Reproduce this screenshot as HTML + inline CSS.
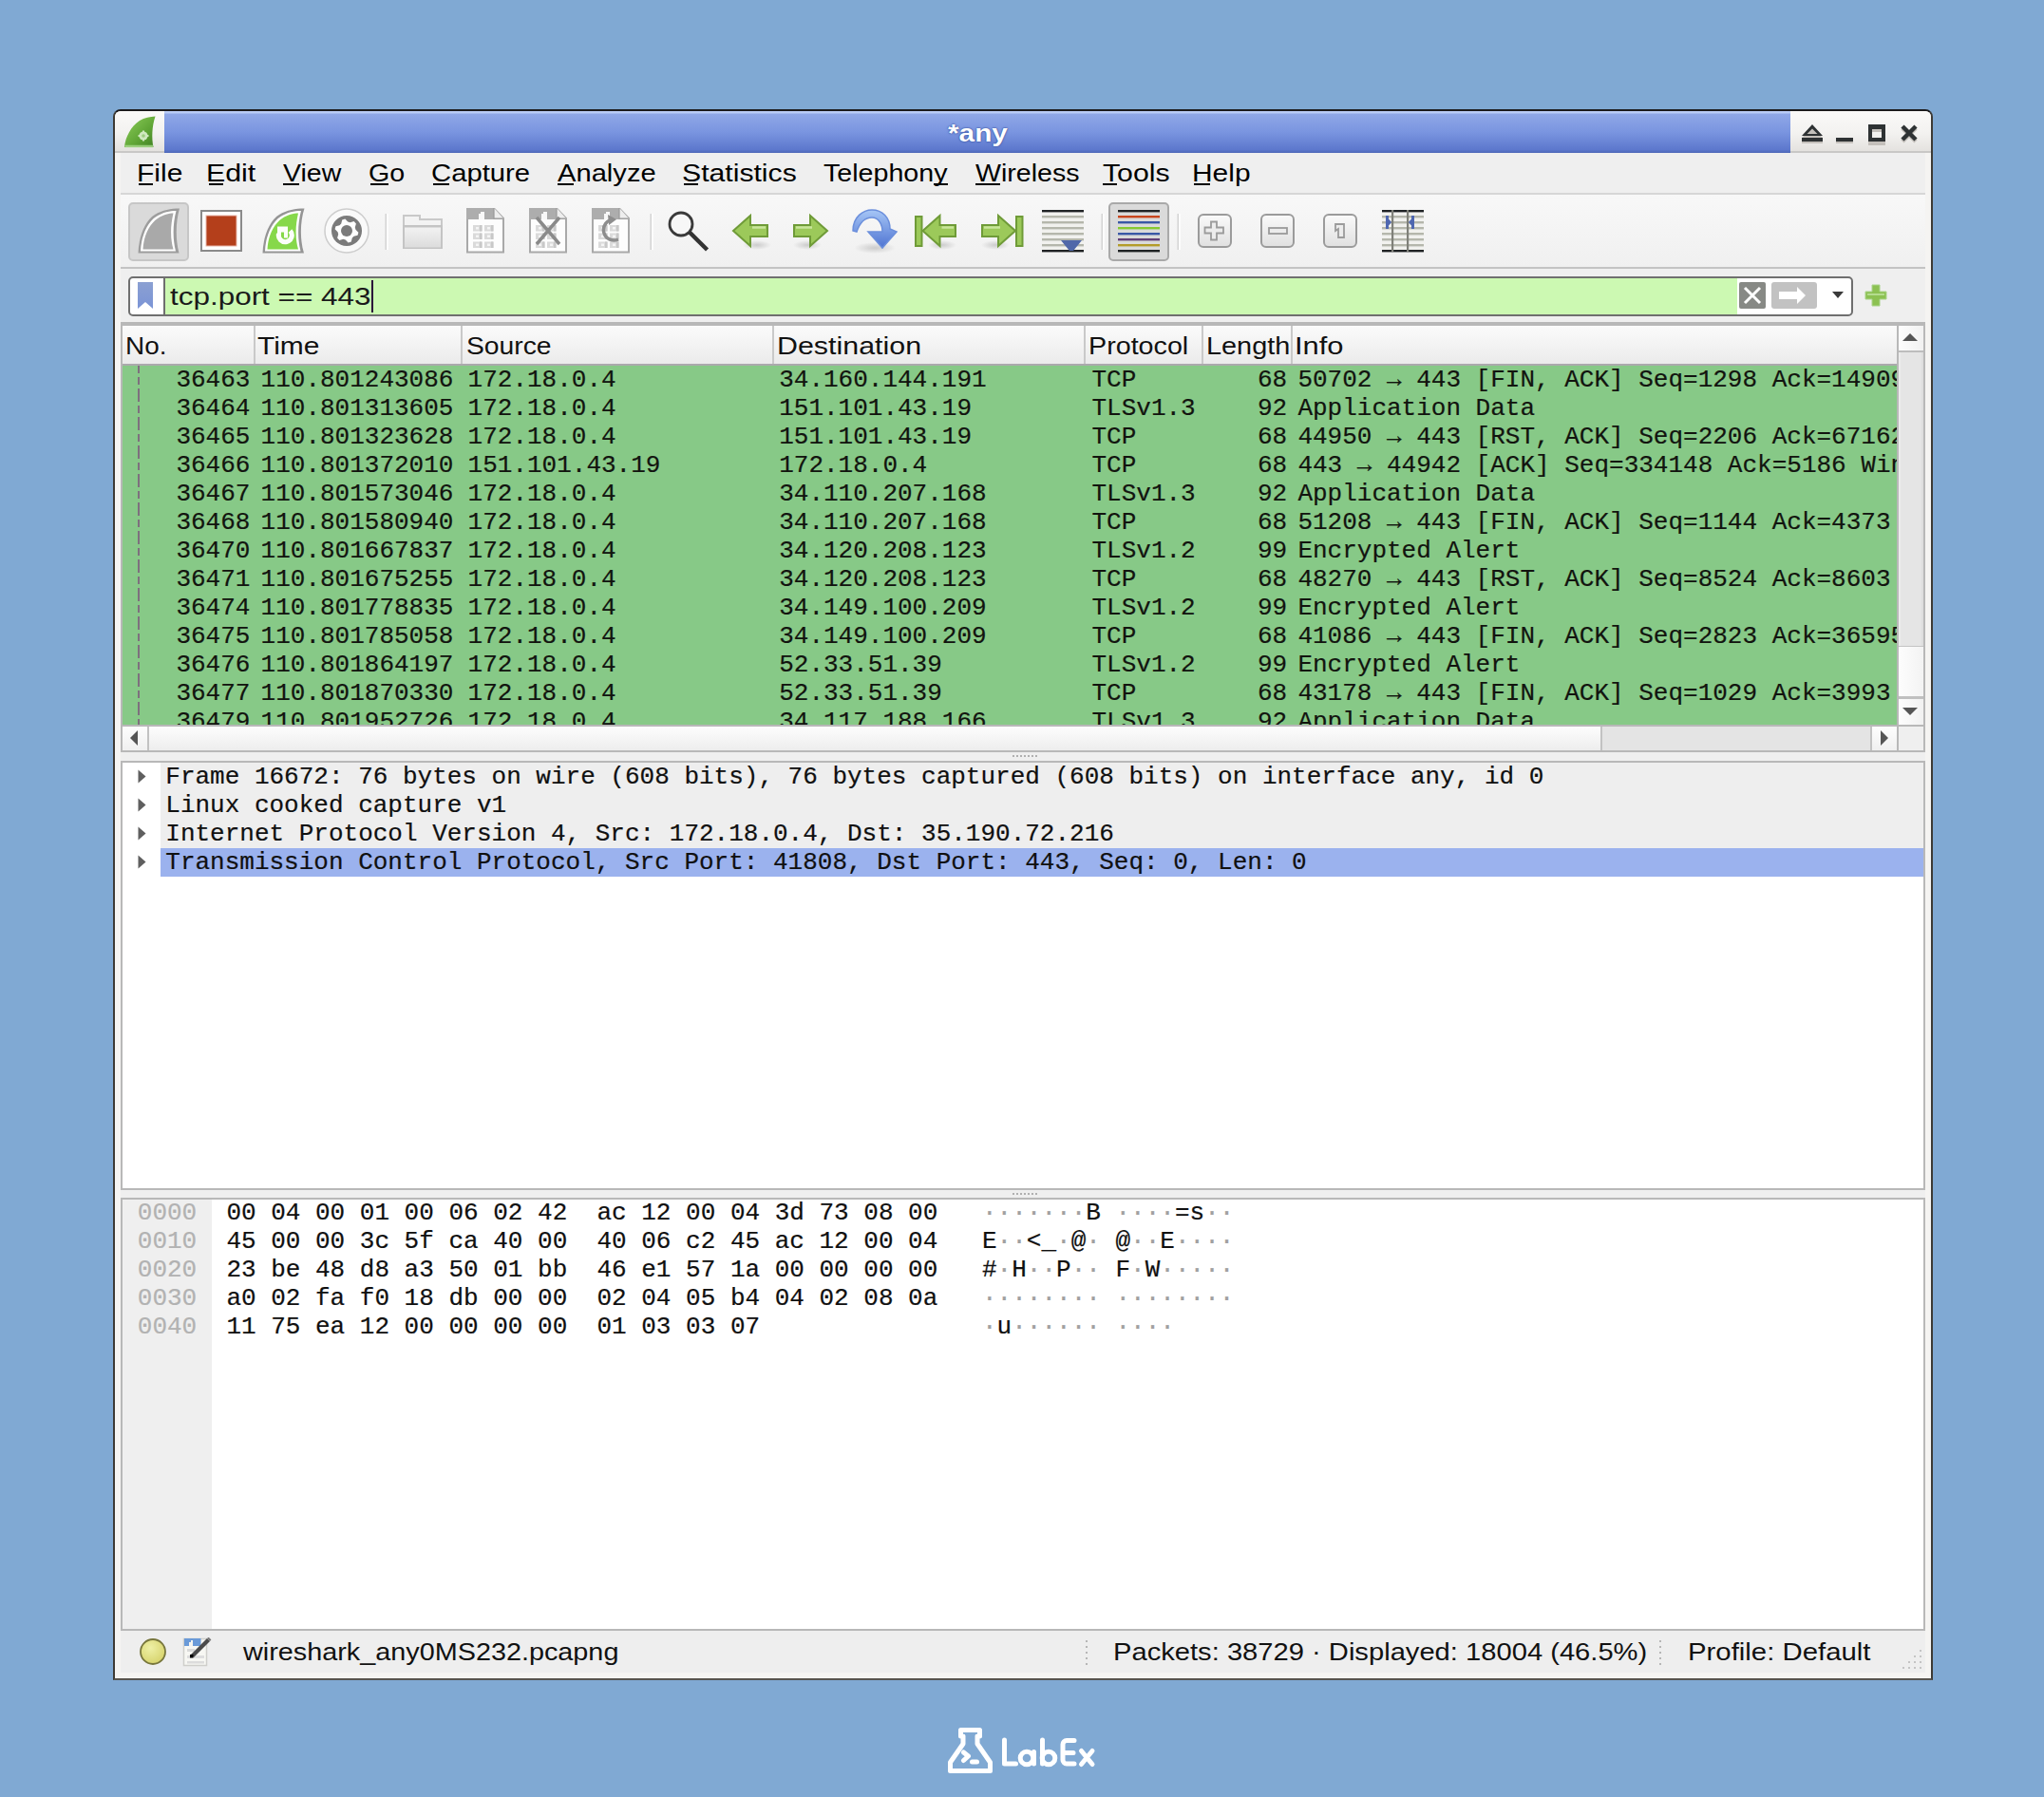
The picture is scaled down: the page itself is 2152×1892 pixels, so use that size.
<!DOCTYPE html><html><head><meta charset="utf-8"><style>
html,body{margin:0;padding:0}
body{width:2152px;height:1892px;background:#80a9d3;position:relative;overflow:hidden;font-family:"Liberation Sans",sans-serif}
div,span,svg{position:absolute;box-sizing:border-box}
.s{font-family:"Liberation Sans",sans-serif;white-space:pre;line-height:1;transform-origin:0 0}
.m{font-family:"Liberation Mono",monospace;white-space:pre;line-height:1;-webkit-text-stroke:0.2px currentColor}
</style></head><body>
<div style="left:119px;top:115px;width:1916px;height:1654px;background:#f5f4f2;border:2px solid #3d3a35;border-top-color:#1b1a1c;border-bottom-color:#57544f;border-radius:8px 8px 0 0"></div><div style="left:121px;top:117px;width:52px;height:42px;background:linear-gradient(#faf9f8,#f3f2f0 55%,#e4e2df);border-top-left-radius:6px"></div><div style="left:173px;top:117px;width:1712px;height:44px;background:linear-gradient(#b9cbf6 0px,#b9cbf6 2px,#8fa7e7 3px,#7a95e0 50%,#5d78cd 92%,#4e68b8 100%)"></div><div style="left:1885px;top:117px;width:148px;height:42px;background:linear-gradient(#faf9f8,#f3f2f0 55%,#e4e2df);border-top-right-radius:6px"></div><div style="left:121px;top:159px;width:52px;height:2px;background:#c9c8c6"></div><div style="left:1885px;top:159px;width:148px;height:2px;background:#c9c8c6"></div><svg style="left:129px;top:121px" width="38" height="36" viewBox="0 0 38 36">
<defs><linearGradient id="tg" x1="0" y1="0" x2="1" y2="1"><stop offset="0" stop-color="#8fcf5c"/><stop offset="0.6" stop-color="#5fa535"/><stop offset="1" stop-color="#3f7f22"/></linearGradient></defs>
<path d="M2 34 C3 23 9 12 18 6 C23 3 29 2 34.5 1.5 C31 12 30.5 24 32.5 34 Z" fill="url(#tg)"/>
<path d="M2.5 33 L32 33" stroke="#a6d88a" stroke-width="2.5" opacity="0.85"/>
<circle cx="22" cy="22" r="4.6" fill="#cfe8bf"/><circle cx="22" cy="22" r="1.8" fill="#9ccc80"/>
<path d="M22 16.5 v3 M22 24.5 v3 M16.5 22 h3 M24.5 22 h3" stroke="#cfe8bf" stroke-width="2"/>
</svg><span class="s" style="left:997.52px;top:128.47px;font-size:25px;color:#fff;transform:scaleX(1.1902);font-weight:bold;text-shadow:0 0 2px #2f4a9a,0 0 1px #2f4a9a">*any</span><svg style="left:1895px;top:129px" width="130" height="26" viewBox="0 0 130 26">
<g fill="#c4c0bb">
<path d="M2 14 L13 4 L24 14 Z" transform="translate(0,2)"/><rect x="2" y="18" width="22" height="4"/>
<rect x="38" y="18" width="18" height="4"/>
<path d="M72 4 h18 v18 h-18 z M76 8 v10 h10 v-10 z" fill-rule="evenodd" transform="translate(0,2)"/>
</g>
<g fill="#2e3233">
<path d="M2 14 L13 2 L24 14 Z M7.5 12 L13 6.5 L18.5 12 Z" fill-rule="evenodd"/><rect x="2" y="16" width="22" height="4"/>
<rect x="38" y="16" width="18" height="4"/>
<path d="M72 2 h18 v18 h-18 z M76 7 v9 h10 v-9 z" fill-rule="evenodd"/>
</g>
<path d="M108 4 L122 18 M122 4 L108 18" stroke="#c4c0bb" stroke-width="4.5" transform="translate(0,2)"/>
<path d="M108 4 L122 18 M122 4 L108 18" stroke="#2e3233" stroke-width="4.5"/>
</svg><div style="left:127px;top:161px;width:1900px;height:42px;background:#efefef"></div><div style="left:127px;top:203px;width:1900px;height:2px;background:#d6d6d6"></div><span class="s" style="left:143.69px;top:169.46px;font-size:26px;color:#000;transform:scaleX(1.1538);">File</span><span class="s" style="left:216.58px;top:169.46px;font-size:26px;color:#000;transform:scaleX(1.1667);">Edit</span><span class="s" style="left:298.00px;top:169.46px;font-size:26px;color:#000;transform:scaleX(1.0982);">View</span><span class="s" style="left:388.48px;top:169.46px;font-size:26px;color:#000;transform:scaleX(1.1000);">Go</span><span class="s" style="left:454.30px;top:169.46px;font-size:26px;color:#000;transform:scaleX(1.1253);">Capture</span><span class="s" style="left:587.00px;top:169.46px;font-size:26px;color:#000;transform:scaleX(1.1209);">Analyze</span><span class="s" style="left:717.54px;top:169.46px;font-size:26px;color:#000;transform:scaleX(1.1608);">Statistics</span><span class="s" style="left:866.95px;top:169.46px;font-size:26px;color:#000;transform:scaleX(1.1008);">Telephony</span><span class="s" style="left:1027.00px;top:169.46px;font-size:26px;color:#000;transform:scaleX(1.0990);">Wireless</span><span class="s" style="left:1160.78px;top:169.46px;font-size:26px;color:#000;transform:scaleX(1.1633);">Tools</span><span class="s" style="left:1255.34px;top:169.46px;font-size:26px;color:#000;transform:scaleX(1.1510);">Help</span><div style="left:146px;top:193px;width:15px;height:2px;background:#000"></div><div style="left:220px;top:193px;width:15px;height:2px;background:#000"></div><div style="left:298px;top:193px;width:17px;height:2px;background:#000"></div><div style="left:390px;top:193px;width:19px;height:2px;background:#000"></div><div style="left:456px;top:193px;width:17px;height:2px;background:#000"></div><div style="left:587px;top:193px;width:17px;height:2px;background:#000"></div><div style="left:720px;top:193px;width:15px;height:2px;background:#000"></div><div style="left:983px;top:193px;width:15px;height:2px;background:#000"></div><div style="left:1027px;top:193px;width:26px;height:2px;background:#000"></div><div style="left:1161px;top:193px;width:15px;height:2px;background:#000"></div><div style="left:1257px;top:193px;width:17px;height:2px;background:#000"></div><div style="left:127px;top:205px;width:1900px;height:76px;background:linear-gradient(#f8f8f8,#f0f0f0)"></div><div style="left:127px;top:281px;width:1900px;height:2px;background:#c3c3c3"></div><svg style="left:0;top:0" width="2152" height="300" viewBox="0 0 2152 300"><defs><radialGradient id="sh"><stop offset="0" stop-color="#000" stop-opacity="0.16"/><stop offset="1" stop-color="#000" stop-opacity="0"/></radialGradient><linearGradient id="fg" x1="0" y1="0" x2="0" y2="1"><stop offset="0" stop-color="#f2f2f2"/><stop offset="1" stop-color="#dcdcdc"/></linearGradient><linearGradient id="zg" x1="0" y1="0" x2="0" y2="1"><stop offset="0" stop-color="#fafafa"/><stop offset="1" stop-color="#e0e0e0"/></linearGradient><linearGradient id="bg1" x1="0" y1="0" x2="0" y2="1"><stop offset="0" stop-color="#a6c6f6"/><stop offset="1" stop-color="#4f74d2"/></linearGradient></defs><rect x="136" y="214" width="62" height="60" rx="4" fill="#dadada" stroke="#c6c6c6" stroke-width="2"/><path d="M145.5 266.5 C146 249 153 232 163 226 C171 221 180 219.5 189 219.5 C185 233 184.5 252 188.5 266.5 Z" fill="#9d9d9d"/><path d="M148 264.5 C148.5 249 155 234 164.5 228 C171.5 223.5 179 222 185.5 222 C182 235 181.5 251 185 264.5 Z" fill="#fff"/><path d="M150.5 262.5 C151 249 157 236 166 230 C172 226 178 224.5 182.5 224.5 C179.5 237 179 251 182.5 262.5 Z" fill="#a9a9a9"/><rect x="212" y="222" width="42" height="42" fill="#fff" stroke="#8a8a8a" stroke-width="2"/><rect x="216.5" y="226.5" width="33" height="33" fill="#e9b7aa"/><rect x="217.5" y="227.5" width="31" height="31" fill="#b43f1b"/><path d="M276.5 266.5 C277 249 284 232 294 226 C302 221 311 219.5 320.5 219.5 C316 233 315.5 252 320 266.5 Z" fill="#959595"/><path d="M279 264.5 C279.5 249 286 234 295.5 228 C302.5 223.5 310 222 317 222 C313.5 235 313 251 316.5 264.5 Z" fill="#fff"/><path d="M281.5 262.5 C282 249 288 236 297 230 C303 226 309 224.5 314 224.5 C311 237 310.5 251 314 262.5 Z" fill="#86d84a"/><path d="M293.5 246 A7 7 0 1 0 305.5 243" fill="none" stroke="#fbfefa" stroke-width="5"/><path d="M292 238.5 h11 v12 h-4 v-6 h-3 v5 h-4 z" fill="#fbfefa"/><circle cx="365" cy="243" r="23" fill="#fafafa" stroke="#cdcdcd" stroke-width="1.5"/><circle cx="365" cy="243" r="16" fill="#7b7b7b"/><polygon points="377.39,244.63 376.55,247.78 372.54,248.78 370.78,250.54 369.78,254.55 366.63,255.39 363.76,252.42 361.36,251.78 357.39,252.92 355.08,250.61 356.22,246.64 355.58,244.24 352.61,241.37 353.45,238.22 357.46,237.22 359.22,235.46 360.22,231.45 363.37,230.61 366.24,233.58 368.64,234.22 372.61,233.08 374.92,235.39 373.78,239.36 374.42,241.76" fill="#fff"/><circle cx="365" cy="243" r="6" fill="#7b7b7b"/><rect x="405.5" y="225" width="1.6" height="38" fill="#d3d3d3"/><rect x="407.1" y="225" width="1.6" height="38" fill="#ffffff"/><rect x="684.5" y="225" width="1.6" height="38" fill="#d3d3d3"/><rect x="686.1" y="225" width="1.6" height="38" fill="#ffffff"/><rect x="1159.5" y="225" width="1.6" height="38" fill="#d3d3d3"/><rect x="1161.1" y="225" width="1.6" height="38" fill="#ffffff"/><rect x="1239.5" y="225" width="1.6" height="38" fill="#d3d3d3"/><rect x="1241.1" y="225" width="1.6" height="38" fill="#ffffff"/><path d="M424 226 h19 v4 h23 v32 h-42 z" fill="#c9c9c9"/><path d="M426 228 h15 v4 h23 v6 h-38 z" fill="#f3f3f3"/><rect x="424" y="237" width="42" height="25" fill="#c4c4c4"/><rect x="426" y="239.5" width="38" height="21" fill="url(#fg)"/><path d="M492 220 h28.5 l9.5 10 v35.5 h-38 z" fill="#fdfdfd" stroke="#a9a9a9" stroke-width="2"/><path d="M491 219 h29.5 l10.5 11 v1 h-40 z" fill="#adadad"/><path d="M520 219 v11 h10" fill="#eeeeee" stroke="#9a9a9a" stroke-width="1.2"/><path d="M504 231 v-6 h2 v-2 h4 v8 z" fill="#f8f8f8"/><rect x="498" y="237" width="10" height="6.5" fill="#dadada"/><rect x="501" y="239" width="3" height="2.5" fill="#f4f4f4"/><rect x="505" y="237" width="2" height="6.5" fill="#c8c8c8"/><rect x="510" y="237" width="10" height="6.5" fill="#dadada"/><rect x="513" y="239" width="3" height="2.5" fill="#f4f4f4"/><rect x="517" y="237" width="2" height="6.5" fill="#c8c8c8"/><rect x="498" y="245.5" width="10" height="6.5" fill="#dadada"/><rect x="501" y="247.5" width="3" height="2.5" fill="#f4f4f4"/><rect x="505" y="245.5" width="2" height="6.5" fill="#c8c8c8"/><rect x="510" y="245.5" width="10" height="6.5" fill="#dadada"/><rect x="513" y="247.5" width="3" height="2.5" fill="#f4f4f4"/><rect x="517" y="245.5" width="2" height="6.5" fill="#c8c8c8"/><rect x="498" y="254.5" width="10" height="6.5" fill="#dadada"/><rect x="501" y="256.5" width="3" height="2.5" fill="#f4f4f4"/><rect x="505" y="254.5" width="2" height="6.5" fill="#c8c8c8"/><rect x="510" y="254.5" width="10" height="6.5" fill="#dadada"/><rect x="513" y="256.5" width="3" height="2.5" fill="#f4f4f4"/><rect x="517" y="254.5" width="2" height="6.5" fill="#c8c8c8"/><path d="M558 220 h28.5 l9.5 10 v35.5 h-38 z" fill="#fdfdfd" stroke="#a9a9a9" stroke-width="2"/><path d="M557 219 h29.5 l10.5 11 v1 h-40 z" fill="#adadad"/><path d="M586 219 v11 h10" fill="#eeeeee" stroke="#9a9a9a" stroke-width="1.2"/><path d="M570 231 v-6 h2 v-2 h4 v8 z" fill="#f8f8f8"/><rect x="564" y="237" width="10" height="6.5" fill="#dadada"/><rect x="567" y="239" width="3" height="2.5" fill="#f4f4f4"/><rect x="571" y="237" width="2" height="6.5" fill="#c8c8c8"/><rect x="576" y="237" width="10" height="6.5" fill="#dadada"/><rect x="579" y="239" width="3" height="2.5" fill="#f4f4f4"/><rect x="583" y="237" width="2" height="6.5" fill="#c8c8c8"/><rect x="564" y="245.5" width="10" height="6.5" fill="#dadada"/><rect x="567" y="247.5" width="3" height="2.5" fill="#f4f4f4"/><rect x="571" y="245.5" width="2" height="6.5" fill="#c8c8c8"/><rect x="576" y="245.5" width="10" height="6.5" fill="#dadada"/><rect x="579" y="247.5" width="3" height="2.5" fill="#f4f4f4"/><rect x="583" y="245.5" width="2" height="6.5" fill="#c8c8c8"/><rect x="564" y="254.5" width="10" height="6.5" fill="#dadada"/><rect x="567" y="256.5" width="3" height="2.5" fill="#f4f4f4"/><rect x="571" y="254.5" width="2" height="6.5" fill="#c8c8c8"/><rect x="576" y="254.5" width="10" height="6.5" fill="#dadada"/><rect x="579" y="256.5" width="3" height="2.5" fill="#f4f4f4"/><rect x="583" y="254.5" width="2" height="6.5" fill="#c8c8c8"/><path d="M565 229 L589 257 M589 229 L565 257" stroke="#8a8a8a" stroke-width="3.5"/><path d="M624 220 h28.5 l9.5 10 v35.5 h-38 z" fill="#fdfdfd" stroke="#a9a9a9" stroke-width="2"/><path d="M623 219 h29.5 l10.5 11 v1 h-40 z" fill="#adadad"/><path d="M652 219 v11 h10" fill="#eeeeee" stroke="#9a9a9a" stroke-width="1.2"/><path d="M636 231 v-6 h2 v-2 h4 v8 z" fill="#f8f8f8"/><rect x="630" y="237" width="10" height="6.5" fill="#dadada"/><rect x="633" y="239" width="3" height="2.5" fill="#f4f4f4"/><rect x="637" y="237" width="2" height="6.5" fill="#c8c8c8"/><rect x="642" y="237" width="10" height="6.5" fill="#dadada"/><rect x="645" y="239" width="3" height="2.5" fill="#f4f4f4"/><rect x="649" y="237" width="2" height="6.5" fill="#c8c8c8"/><rect x="630" y="245.5" width="10" height="6.5" fill="#dadada"/><rect x="633" y="247.5" width="3" height="2.5" fill="#f4f4f4"/><rect x="637" y="245.5" width="2" height="6.5" fill="#c8c8c8"/><rect x="642" y="245.5" width="10" height="6.5" fill="#dadada"/><rect x="645" y="247.5" width="3" height="2.5" fill="#f4f4f4"/><rect x="649" y="245.5" width="2" height="6.5" fill="#c8c8c8"/><rect x="630" y="254.5" width="10" height="6.5" fill="#dadada"/><rect x="633" y="256.5" width="3" height="2.5" fill="#f4f4f4"/><rect x="637" y="254.5" width="2" height="6.5" fill="#c8c8c8"/><rect x="642" y="254.5" width="10" height="6.5" fill="#dadada"/><rect x="645" y="256.5" width="3" height="2.5" fill="#f4f4f4"/><rect x="649" y="254.5" width="2" height="6.5" fill="#c8c8c8"/><path d="M651 252 A11 11 0 1 1 646 231" fill="none" stroke="#8d8d8d" stroke-width="3.5"/><path d="M640 226 L649 231 L641 237 Z" fill="#8d8d8d"/><circle cx="717" cy="236" r="12" fill="#f7f7f7" stroke="#3a3a3a" stroke-width="2.8"/><path d="M727.5 246 L743 261.5" stroke="#333" stroke-width="4.4" stroke-linecap="square"/><ellipse cx="797" cy="258" rx="15" ry="5" fill="url(#sh)"/><path d="M772 243 L790 227 L790 237 L808 237 L808 249 L790 249 L790 259 Z" fill="#9cc95a" stroke="#6f9b38" stroke-width="2" stroke-linejoin="miter"/><path d="M792 239.5 L806 239.5" stroke="#c9e59b" stroke-width="2.5"/><ellipse cx="850" cy="258" rx="15" ry="5" fill="url(#sh)"/><path d="M871 243 L853 227 L853 237 L836 237 L836 249 L853 249 L853 259 Z" fill="#9cc95a" stroke="#6f9b38" stroke-width="2"/><path d="M838 239.5 L855 239.5" stroke="#c9e59b" stroke-width="2.5"/><ellipse cx="921" cy="261" rx="22" ry="6" fill="url(#sh)"/><path d="M898 243 C898 228 909 221 918 221 C929 221 937 229 937 241 L944 244 L929 261 L914 244 L929 244 C929 236 925 229 918 229 C910 229 905 235 902 244 Z" fill="url(#bg1)" stroke="#6b8fdc" stroke-width="1.5"/><rect x="964" y="228" width="6.5" height="31" fill="#9cc95a" stroke="#6f9b38" stroke-width="2"/><ellipse cx="992" cy="258" rx="15" ry="5" fill="url(#sh)"/><path d="M971.5 243 L989.5 227 L989.5 237 L1006 237 L1006 249 L989.5 249 L989.5 259 Z" fill="#9cc95a" stroke="#6f9b38" stroke-width="2" stroke-linejoin="miter"/><path d="M991.5 239.5 L1004 239.5" stroke="#c9e59b" stroke-width="2.5"/><rect x="1070" y="228" width="6.5" height="31" fill="#9cc95a" stroke="#6f9b38" stroke-width="2"/><ellipse cx="1048" cy="258" rx="15" ry="5" fill="url(#sh)"/><path d="M1069 243 L1051 227 L1051 237 L1034 237 L1034 249 L1051 249 L1051 259 Z" fill="#9cc95a" stroke="#6f9b38" stroke-width="2"/><path d="M1036 239.5 L1053 239.5" stroke="#c9e59b" stroke-width="2.5"/><rect x="1097" y="221" width="44" height="44" fill="#f1f1ee"/><rect x="1097" y="221" width="44" height="2.4" fill="#1f2224"/><rect x="1097" y="227" width="44" height="2.4" fill="#b5b7ac"/><rect x="1097" y="233" width="44" height="2.4" fill="#b5b7ac"/><rect x="1097" y="239" width="44" height="2.4" fill="#b5b7ac"/><rect x="1097" y="245" width="44" height="2.4" fill="#b5b7ac"/><rect x="1097" y="251" width="44" height="2.4" fill="#b5b7ac"/><rect x="1097" y="257" width="44" height="2.4" fill="#b5b7ac"/><rect x="1097" y="263" width="44" height="2.4" fill="#1f2224"/><path d="M1117 253 L1139 253 L1135 258 L1130 264 L1126 264 L1121 258 Z" fill="#5068a9"/><rect x="1168" y="214" width="62" height="60" rx="4" fill="#dadada" stroke="#a9a9a9" stroke-width="2"/><rect x="1177" y="221" width="44" height="2.4" fill="#1f2224"/><rect x="1177" y="227" width="44" height="2.4" fill="#c8461e"/><rect x="1177" y="233" width="44" height="2.4" fill="#3a58a6"/><rect x="1177" y="239" width="44" height="2.4" fill="#86c932"/><rect x="1177" y="245" width="44" height="2.4" fill="#3a58a6"/><rect x="1177" y="251" width="44" height="2.4" fill="#633f78"/><rect x="1177" y="257" width="44" height="2.4" fill="#b49c2a"/><rect x="1177" y="263" width="44" height="2.4" fill="#1f2224"/><rect x="1262" y="226" width="34" height="34" rx="5" fill="url(#zg)" stroke="#9b9b9b" stroke-width="2"/><rect x="1328" y="226" width="34" height="34" rx="5" fill="url(#zg)" stroke="#9b9b9b" stroke-width="2"/><rect x="1394" y="226" width="34" height="34" rx="5" fill="url(#zg)" stroke="#9b9b9b" stroke-width="2"/><path d="M1275 233.5 h6 v6 h7 v6 h-7 v7 h-6 v-7 h-6.5 v-6 h6.5 z" fill="#ececec" stroke="#9b9b9b" stroke-width="1.8"/><rect x="1336" y="240" width="19" height="6" fill="#ececec" stroke="#9b9b9b" stroke-width="1.8"/><path d="M1406 236 h9 v14 h-6 v-9 l-3 2 z" fill="#ececec" stroke="#9b9b9b" stroke-width="1.8"/><rect x="1455" y="221" width="44" height="44" fill="#f1f1ee"/><rect x="1455" y="221" width="44" height="2.4" fill="#1f2224"/><rect x="1455" y="227" width="44" height="2.4" fill="#b5b7ac"/><rect x="1455" y="233" width="44" height="2.4" fill="#b5b7ac"/><rect x="1455" y="239" width="44" height="2.4" fill="#b5b7ac"/><rect x="1455" y="245" width="44" height="2.4" fill="#b5b7ac"/><rect x="1455" y="251" width="44" height="2.4" fill="#b5b7ac"/><rect x="1455" y="257" width="44" height="2.4" fill="#b5b7ac"/><rect x="1455" y="263" width="44" height="2.4" fill="#1f2224"/><rect x="1465" y="221" width="2.2" height="44" fill="#7f8079"/><rect x="1481" y="221" width="2.2" height="44" fill="#7f8079"/><path d="M1459 227 L1459 241 L1465 234 Z M1489 227 L1489 241 L1483 234 Z" fill="#4f67b0"/><rect x="1459" y="227" width="3" height="14" fill="#4f67b0"/><rect x="1486" y="227" width="3" height="14" fill="#4f67b0"/></svg><div style="left:127px;top:283px;width:1900px;height:56px;background:#efefef"></div><div style="left:135px;top:291px;width:1816px;height:42px;border:2px solid #6f6f6f;border-radius:5px;background:#fff"></div><div style="left:172px;top:293px;width:2px;height:38px;background:#6f6f6f"></div><div style="left:174px;top:293px;width:1655px;height:38px;background:#ccf9b2"></div><svg style="left:144px;top:296px" width="18" height="30" viewBox="0 0 18 30"><defs><linearGradient id="bm" x1="0" y1="0" x2="0" y2="1"><stop offset="0" stop-color="#8ba0d2"/><stop offset="1" stop-color="#7b94d6"/></linearGradient></defs><path d="M1 1 h16 v28 l-8 -7 l-8 7 z" fill="url(#bm)"/></svg><span class="s" style="left:178.67px;top:298.96px;font-size:26px;color:#1a1a1a;transform:scaleX(1.2092);">tcp.port == 443</span><div style="left:391px;top:295px;width:2px;height:34px;background:#2a0a3a"></div><svg style="left:1830px;top:296px" width="125" height="30" viewBox="0 0 125 30"><rect x="1" y="1" width="28" height="28" rx="2" fill="#878985"/><path d="M7 7 L23 23 M23 7 L7 23" stroke="#fff" stroke-width="3"/><rect x="35" y="1" width="48" height="28" rx="3" fill="#c2c2c2"/><path d="M43 11 h19 v-5 l9 9 l-9 9 v-5 h-19 z" fill="#fff"/><path d="M99 11 L111 11 L105 18 Z" fill="#3a3a3a"/></svg><svg style="left:1962px;top:298px" width="26" height="26" viewBox="0 0 26 26"><path d="M9 2 h8 v7 h7 v8 h-7 v7 h-8 v-7 h-7 v-8 h7 z" fill="#8cc152" stroke="#a9d48a" stroke-width="1"/><path d="M4 12 h18" stroke="#b4dc8e" stroke-width="2"/></svg><div style="left:127px;top:339px;width:1900px;height:453px;background:#b8b8b8"></div><div style="left:129px;top:343px;width:1868px;height:40px;background:linear-gradient(#fbfbfb,#ebebeb)"></div><div style="left:129px;top:383px;width:1868px;height:2px;background:#aba9ac"></div><div style="left:267px;top:343px;width:2px;height:40px;background:#c9c9c9"></div><div style="left:485px;top:343px;width:2px;height:40px;background:#c9c9c9"></div><div style="left:813px;top:343px;width:2px;height:40px;background:#c9c9c9"></div><div style="left:1141px;top:343px;width:2px;height:40px;background:#c9c9c9"></div><div style="left:1265px;top:343px;width:2px;height:40px;background:#c9c9c9"></div><div style="left:1359px;top:343px;width:2px;height:40px;background:#c9c9c9"></div><div style="left:1997px;top:383px;width:0px;height:0px;"></div><span class="s" style="left:132.23px;top:350.96px;font-size:26px;color:#111;transform:scaleX(1.0722);">No.</span><span class="s" style="left:271.49px;top:350.96px;font-size:26px;color:#111;transform:scaleX(1.1527);">Time</span><span class="s" style="left:490.50px;top:350.96px;font-size:26px;color:#111;transform:scaleX(1.0875);">Source</span><span class="s" style="left:817.66px;top:350.96px;font-size:26px;color:#111;transform:scaleX(1.1690);">Destination</span><span class="s" style="left:1145.95px;top:350.96px;font-size:26px;color:#111;transform:scaleX(1.1033);">Protocol</span><span class="s" style="left:1269.93px;top:350.96px;font-size:26px;color:#111;transform:scaleX(1.1105);">Length</span><span class="s" style="left:1362.53px;top:350.96px;font-size:26px;color:#111;transform:scaleX(1.1875);">Info</span><div style="left:129px;top:385px;width:1868px;height:378px;background:#87c987;overflow:hidden"><div style="left:16px;top:-18px;width:2px;height:420px;background:repeating-linear-gradient(#7e707e 0 8px,transparent 8px 12px,#7e707e 12px 26px,transparent 26px 30px)"></div><span class="m" style="left:56.40px;top:1.55px;font-size:26px;color:#12140f;">36463</span><span class="m" style="left:145.60px;top:1.55px;font-size:26px;color:#12140f;">110.801243086</span><span class="m" style="left:363.60px;top:1.55px;font-size:26px;color:#12140f;">172.18.0.4</span><span class="m" style="left:691.20px;top:1.55px;font-size:26px;color:#12140f;">34.160.144.191</span><span class="m" style="left:1020.50px;top:1.55px;font-size:26px;color:#12140f;">TCP</span><span class="m" style="left:1194.90px;top:1.55px;font-size:26px;color:#12140f;">68</span><span class="m" style="left:1237.40px;top:1.55px;font-size:26px;color:#12140f;">50702 → 443 [FIN, ACK] Seq=1298 Ack=14909 Win=64256 Len=0</span><span class="m" style="left:56.40px;top:31.55px;font-size:26px;color:#12140f;">36464</span><span class="m" style="left:145.60px;top:31.55px;font-size:26px;color:#12140f;">110.801313605</span><span class="m" style="left:363.60px;top:31.55px;font-size:26px;color:#12140f;">172.18.0.4</span><span class="m" style="left:691.20px;top:31.55px;font-size:26px;color:#12140f;">151.101.43.19</span><span class="m" style="left:1020.50px;top:31.55px;font-size:26px;color:#12140f;">TLSv1.3</span><span class="m" style="left:1194.90px;top:31.55px;font-size:26px;color:#12140f;">92</span><span class="m" style="left:1237.40px;top:31.55px;font-size:26px;color:#12140f;">Application Data</span><span class="m" style="left:56.40px;top:61.55px;font-size:26px;color:#12140f;">36465</span><span class="m" style="left:145.60px;top:61.55px;font-size:26px;color:#12140f;">110.801323628</span><span class="m" style="left:363.60px;top:61.55px;font-size:26px;color:#12140f;">172.18.0.4</span><span class="m" style="left:691.20px;top:61.55px;font-size:26px;color:#12140f;">151.101.43.19</span><span class="m" style="left:1020.50px;top:61.55px;font-size:26px;color:#12140f;">TCP</span><span class="m" style="left:1194.90px;top:61.55px;font-size:26px;color:#12140f;">68</span><span class="m" style="left:1237.40px;top:61.55px;font-size:26px;color:#12140f;">44950 → 443 [RST, ACK] Seq=2206 Ack=67162 Win=0 Len=0</span><span class="m" style="left:56.40px;top:91.55px;font-size:26px;color:#12140f;">36466</span><span class="m" style="left:145.60px;top:91.55px;font-size:26px;color:#12140f;">110.801372010</span><span class="m" style="left:363.60px;top:91.55px;font-size:26px;color:#12140f;">151.101.43.19</span><span class="m" style="left:691.20px;top:91.55px;font-size:26px;color:#12140f;">172.18.0.4</span><span class="m" style="left:1020.50px;top:91.55px;font-size:26px;color:#12140f;">TCP</span><span class="m" style="left:1194.90px;top:91.55px;font-size:26px;color:#12140f;">68</span><span class="m" style="left:1237.40px;top:91.55px;font-size:26px;color:#12140f;">443 → 44942 [ACK] Seq=334148 Ack=5186 Win=64256 Len=0</span><span class="m" style="left:56.40px;top:121.55px;font-size:26px;color:#12140f;">36467</span><span class="m" style="left:145.60px;top:121.55px;font-size:26px;color:#12140f;">110.801573046</span><span class="m" style="left:363.60px;top:121.55px;font-size:26px;color:#12140f;">172.18.0.4</span><span class="m" style="left:691.20px;top:121.55px;font-size:26px;color:#12140f;">34.110.207.168</span><span class="m" style="left:1020.50px;top:121.55px;font-size:26px;color:#12140f;">TLSv1.3</span><span class="m" style="left:1194.90px;top:121.55px;font-size:26px;color:#12140f;">92</span><span class="m" style="left:1237.40px;top:121.55px;font-size:26px;color:#12140f;">Application Data</span><span class="m" style="left:56.40px;top:151.55px;font-size:26px;color:#12140f;">36468</span><span class="m" style="left:145.60px;top:151.55px;font-size:26px;color:#12140f;">110.801580940</span><span class="m" style="left:363.60px;top:151.55px;font-size:26px;color:#12140f;">172.18.0.4</span><span class="m" style="left:691.20px;top:151.55px;font-size:26px;color:#12140f;">34.110.207.168</span><span class="m" style="left:1020.50px;top:151.55px;font-size:26px;color:#12140f;">TCP</span><span class="m" style="left:1194.90px;top:151.55px;font-size:26px;color:#12140f;">68</span><span class="m" style="left:1237.40px;top:151.55px;font-size:26px;color:#12140f;">51208 → 443 [FIN, ACK] Seq=1144 Ack=4373 Win=64256 Len=0</span><span class="m" style="left:56.40px;top:181.55px;font-size:26px;color:#12140f;">36470</span><span class="m" style="left:145.60px;top:181.55px;font-size:26px;color:#12140f;">110.801667837</span><span class="m" style="left:363.60px;top:181.55px;font-size:26px;color:#12140f;">172.18.0.4</span><span class="m" style="left:691.20px;top:181.55px;font-size:26px;color:#12140f;">34.120.208.123</span><span class="m" style="left:1020.50px;top:181.55px;font-size:26px;color:#12140f;">TLSv1.2</span><span class="m" style="left:1194.90px;top:181.55px;font-size:26px;color:#12140f;">99</span><span class="m" style="left:1237.40px;top:181.55px;font-size:26px;color:#12140f;">Encrypted Alert</span><span class="m" style="left:56.40px;top:211.55px;font-size:26px;color:#12140f;">36471</span><span class="m" style="left:145.60px;top:211.55px;font-size:26px;color:#12140f;">110.801675255</span><span class="m" style="left:363.60px;top:211.55px;font-size:26px;color:#12140f;">172.18.0.4</span><span class="m" style="left:691.20px;top:211.55px;font-size:26px;color:#12140f;">34.120.208.123</span><span class="m" style="left:1020.50px;top:211.55px;font-size:26px;color:#12140f;">TCP</span><span class="m" style="left:1194.90px;top:211.55px;font-size:26px;color:#12140f;">68</span><span class="m" style="left:1237.40px;top:211.55px;font-size:26px;color:#12140f;">48270 → 443 [RST, ACK] Seq=8524 Ack=8603 Win=0 Len=0</span><span class="m" style="left:56.40px;top:241.55px;font-size:26px;color:#12140f;">36474</span><span class="m" style="left:145.60px;top:241.55px;font-size:26px;color:#12140f;">110.801778835</span><span class="m" style="left:363.60px;top:241.55px;font-size:26px;color:#12140f;">172.18.0.4</span><span class="m" style="left:691.20px;top:241.55px;font-size:26px;color:#12140f;">34.149.100.209</span><span class="m" style="left:1020.50px;top:241.55px;font-size:26px;color:#12140f;">TLSv1.2</span><span class="m" style="left:1194.90px;top:241.55px;font-size:26px;color:#12140f;">99</span><span class="m" style="left:1237.40px;top:241.55px;font-size:26px;color:#12140f;">Encrypted Alert</span><span class="m" style="left:56.40px;top:271.55px;font-size:26px;color:#12140f;">36475</span><span class="m" style="left:145.60px;top:271.55px;font-size:26px;color:#12140f;">110.801785058</span><span class="m" style="left:363.60px;top:271.55px;font-size:26px;color:#12140f;">172.18.0.4</span><span class="m" style="left:691.20px;top:271.55px;font-size:26px;color:#12140f;">34.149.100.209</span><span class="m" style="left:1020.50px;top:271.55px;font-size:26px;color:#12140f;">TCP</span><span class="m" style="left:1194.90px;top:271.55px;font-size:26px;color:#12140f;">68</span><span class="m" style="left:1237.40px;top:271.55px;font-size:26px;color:#12140f;">41086 → 443 [FIN, ACK] Seq=2823 Ack=36595 Win=64256 Len=0</span><span class="m" style="left:56.40px;top:301.55px;font-size:26px;color:#12140f;">36476</span><span class="m" style="left:145.60px;top:301.55px;font-size:26px;color:#12140f;">110.801864197</span><span class="m" style="left:363.60px;top:301.55px;font-size:26px;color:#12140f;">172.18.0.4</span><span class="m" style="left:691.20px;top:301.55px;font-size:26px;color:#12140f;">52.33.51.39</span><span class="m" style="left:1020.50px;top:301.55px;font-size:26px;color:#12140f;">TLSv1.2</span><span class="m" style="left:1194.90px;top:301.55px;font-size:26px;color:#12140f;">99</span><span class="m" style="left:1237.40px;top:301.55px;font-size:26px;color:#12140f;">Encrypted Alert</span><span class="m" style="left:56.40px;top:331.55px;font-size:26px;color:#12140f;">36477</span><span class="m" style="left:145.60px;top:331.55px;font-size:26px;color:#12140f;">110.801870330</span><span class="m" style="left:363.60px;top:331.55px;font-size:26px;color:#12140f;">172.18.0.4</span><span class="m" style="left:691.20px;top:331.55px;font-size:26px;color:#12140f;">52.33.51.39</span><span class="m" style="left:1020.50px;top:331.55px;font-size:26px;color:#12140f;">TCP</span><span class="m" style="left:1194.90px;top:331.55px;font-size:26px;color:#12140f;">68</span><span class="m" style="left:1237.40px;top:331.55px;font-size:26px;color:#12140f;">43178 → 443 [FIN, ACK] Seq=1029 Ack=3993 Win=64256 Len=0</span><span class="m" style="left:56.40px;top:361.55px;font-size:26px;color:#12140f;">36479</span><span class="m" style="left:145.60px;top:361.55px;font-size:26px;color:#12140f;">110.801952726</span><span class="m" style="left:363.60px;top:361.55px;font-size:26px;color:#12140f;">172.18.0.4</span><span class="m" style="left:691.20px;top:361.55px;font-size:26px;color:#12140f;">34.117.188.166</span><span class="m" style="left:1020.50px;top:361.55px;font-size:26px;color:#12140f;">TLSv1.3</span><span class="m" style="left:1194.90px;top:361.55px;font-size:26px;color:#12140f;">92</span><span class="m" style="left:1237.40px;top:361.55px;font-size:26px;color:#12140f;">Application Data</span></div><div style="left:1999px;top:343px;width:26px;height:26px;background:linear-gradient(90deg,#fdfdfd,#f1f1f1)"></div><svg style="left:2001px;top:348px" width="20" height="14" viewBox="0 0 20 14"><path d="M2 11 L10 3 L18 11 Z" fill="#555"/></svg><div style="left:1999px;top:369px;width:26px;height:2px;background:#bdbdbd"></div><div style="left:1999px;top:371px;width:26px;height:309px;background:#e5e5e5;border-left:2px solid #ececec;border-right:2px solid #dedede"></div><div style="left:1999px;top:680px;width:26px;height:1px;background:#c4c4c4"></div><div style="left:1999px;top:681px;width:26px;height:52px;background:linear-gradient(90deg,#fdfdfd,#f3f3f3)"></div><div style="left:1999px;top:733px;width:26px;height:3px;background:#c0c0c0"></div><div style="left:1999px;top:736px;width:26px;height:27px;background:linear-gradient(90deg,#fdfdfd,#f1f1f1)"></div><svg style="left:2001px;top:742px" width="20" height="14" viewBox="0 0 20 14"><path d="M2 3 L10 11 L18 3 Z" fill="#555"/></svg><div style="left:129px;top:765px;width:1868px;height:25px;background:#e4e4e4"></div><div style="left:129px;top:765px;width:26px;height:25px;background:linear-gradient(#fdfdfd,#f0f0f0)"></div><div style="left:155px;top:765px;width:2px;height:25px;background:#c2c2c2"></div><div style="left:157px;top:765px;width:1528px;height:25px;background:linear-gradient(#fdfdfd,#ededed)"></div><div style="left:1685px;top:765px;width:2px;height:25px;background:#c2c2c2"></div><div style="left:1969px;top:765px;width:2px;height:25px;background:#c2c2c2"></div><div style="left:1971px;top:765px;width:26px;height:25px;background:linear-gradient(#fdfdfd,#f0f0f0)"></div><svg style="left:134px;top:767px" width="14" height="20" viewBox="0 0 14 20"><path d="M11 2 L3 10 L11 18 Z" fill="#555"/></svg><svg style="left:1977px;top:767px" width="14" height="20" viewBox="0 0 14 20"><path d="M3 2 L11 10 L3 18 Z" fill="#555"/></svg><div style="left:1999px;top:765px;width:26px;height:25px;background:#efefef"></div><div style="left:127px;top:792px;width:1900px;height:9px;background:#efefef"></div><div style="left:1066px;top:795px;width:26px;height:2px;background:repeating-linear-gradient(90deg,#b0b0b0 0 2px,transparent 2px 4px)"></div><div style="left:127px;top:801px;width:1900px;height:452px;background:#b8b8b8"></div><div style="left:129px;top:803px;width:1896px;height:448px;background:#fff"></div><div style="left:169px;top:803px;width:1856px;height:90px;background:#eeeeee"></div><div style="left:169px;top:893px;width:1856px;height:30px;background:#9bb2ee"></div><span class="m" style="left:174.30px;top:804.55px;font-size:26px;color:#101010;">Frame 16672: 76 bytes on wire (608 bits), 76 bytes captured (608 bits) on interface any, id 0</span><svg style="left:144px;top:809px" width="12" height="18" viewBox="0 0 12 18"><path d="M1.5 1.5 L9.5 8.5 L1.5 15.5 Z" fill="#5f5f5f"/></svg><span class="m" style="left:174.30px;top:834.55px;font-size:26px;color:#101010;">Linux cooked capture v1</span><svg style="left:144px;top:839px" width="12" height="18" viewBox="0 0 12 18"><path d="M1.5 1.5 L9.5 8.5 L1.5 15.5 Z" fill="#5f5f5f"/></svg><span class="m" style="left:174.30px;top:864.55px;font-size:26px;color:#101010;">Internet Protocol Version 4, Src: 172.18.0.4, Dst: 35.190.72.216</span><svg style="left:144px;top:869px" width="12" height="18" viewBox="0 0 12 18"><path d="M1.5 1.5 L9.5 8.5 L1.5 15.5 Z" fill="#5f5f5f"/></svg><span class="m" style="left:174.30px;top:894.55px;font-size:26px;color:#101010;">Transmission Control Protocol, Src Port: 41808, Dst Port: 443, Seq: 0, Len: 0</span><svg style="left:144px;top:899px" width="12" height="18" viewBox="0 0 12 18"><path d="M1.5 1.5 L9.5 8.5 L1.5 15.5 Z" fill="#5f5f5f"/></svg><div style="left:127px;top:1253px;width:1900px;height:8px;background:#efefef"></div><div style="left:1066px;top:1256px;width:26px;height:2px;background:repeating-linear-gradient(90deg,#b0b0b0 0 2px,transparent 2px 4px)"></div><div style="left:127px;top:1261px;width:1900px;height:456px;background:#b8b8b8"></div><div style="left:129px;top:1263px;width:1896px;height:452px;background:#fff"></div><div style="left:129px;top:1263px;width:94px;height:452px;background:#efefef"></div><span class="m" style="left:144.80px;top:1264.15px;font-size:26px;color:#b2b2b2;">0000</span><span class="m" style="left:238.40px;top:1264.15px;font-size:26px;color:#101010;">00 04 00 01 00 06 02 42  ac 12 00 04 3d 73 08 00</span><span class="m" style="left:1034.00px;top:1264.15px;font-size:26px;color:#101010"><b style="color:#a0a0a0;font-weight:normal">·</b><b style="color:#a0a0a0;font-weight:normal">·</b><b style="color:#a0a0a0;font-weight:normal">·</b><b style="color:#a0a0a0;font-weight:normal">·</b><b style="color:#a0a0a0;font-weight:normal">·</b><b style="color:#a0a0a0;font-weight:normal">·</b><b style="color:#a0a0a0;font-weight:normal">·</b>B <b style="color:#a0a0a0;font-weight:normal">·</b><b style="color:#a0a0a0;font-weight:normal">·</b><b style="color:#a0a0a0;font-weight:normal">·</b><b style="color:#a0a0a0;font-weight:normal">·</b>=s<b style="color:#a0a0a0;font-weight:normal">·</b><b style="color:#a0a0a0;font-weight:normal">·</b></span><span class="m" style="left:144.80px;top:1294.15px;font-size:26px;color:#b2b2b2;">0010</span><span class="m" style="left:238.40px;top:1294.15px;font-size:26px;color:#101010;">45 00 00 3c 5f ca 40 00  40 06 c2 45 ac 12 00 04</span><span class="m" style="left:1034.00px;top:1294.15px;font-size:26px;color:#101010">E<b style="color:#a0a0a0;font-weight:normal">·</b><b style="color:#a0a0a0;font-weight:normal">·</b>&lt;_<b style="color:#a0a0a0;font-weight:normal">·</b>@<b style="color:#a0a0a0;font-weight:normal">·</b> @<b style="color:#a0a0a0;font-weight:normal">·</b><b style="color:#a0a0a0;font-weight:normal">·</b>E<b style="color:#a0a0a0;font-weight:normal">·</b><b style="color:#a0a0a0;font-weight:normal">·</b><b style="color:#a0a0a0;font-weight:normal">·</b><b style="color:#a0a0a0;font-weight:normal">·</b></span><span class="m" style="left:144.80px;top:1324.15px;font-size:26px;color:#b2b2b2;">0020</span><span class="m" style="left:238.40px;top:1324.15px;font-size:26px;color:#101010;">23 be 48 d8 a3 50 01 bb  46 e1 57 1a 00 00 00 00</span><span class="m" style="left:1034.00px;top:1324.15px;font-size:26px;color:#101010">#<b style="color:#a0a0a0;font-weight:normal">·</b>H<b style="color:#a0a0a0;font-weight:normal">·</b><b style="color:#a0a0a0;font-weight:normal">·</b>P<b style="color:#a0a0a0;font-weight:normal">·</b><b style="color:#a0a0a0;font-weight:normal">·</b> F<b style="color:#a0a0a0;font-weight:normal">·</b>W<b style="color:#a0a0a0;font-weight:normal">·</b><b style="color:#a0a0a0;font-weight:normal">·</b><b style="color:#a0a0a0;font-weight:normal">·</b><b style="color:#a0a0a0;font-weight:normal">·</b><b style="color:#a0a0a0;font-weight:normal">·</b></span><span class="m" style="left:144.80px;top:1354.15px;font-size:26px;color:#b2b2b2;">0030</span><span class="m" style="left:238.40px;top:1354.15px;font-size:26px;color:#101010;">a0 02 fa f0 18 db 00 00  02 04 05 b4 04 02 08 0a</span><span class="m" style="left:1034.00px;top:1354.15px;font-size:26px;color:#101010"><b style="color:#a0a0a0;font-weight:normal">·</b><b style="color:#a0a0a0;font-weight:normal">·</b><b style="color:#a0a0a0;font-weight:normal">·</b><b style="color:#a0a0a0;font-weight:normal">·</b><b style="color:#a0a0a0;font-weight:normal">·</b><b style="color:#a0a0a0;font-weight:normal">·</b><b style="color:#a0a0a0;font-weight:normal">·</b><b style="color:#a0a0a0;font-weight:normal">·</b> <b style="color:#a0a0a0;font-weight:normal">·</b><b style="color:#a0a0a0;font-weight:normal">·</b><b style="color:#a0a0a0;font-weight:normal">·</b><b style="color:#a0a0a0;font-weight:normal">·</b><b style="color:#a0a0a0;font-weight:normal">·</b><b style="color:#a0a0a0;font-weight:normal">·</b><b style="color:#a0a0a0;font-weight:normal">·</b><b style="color:#a0a0a0;font-weight:normal">·</b></span><span class="m" style="left:144.80px;top:1384.15px;font-size:26px;color:#b2b2b2;">0040</span><span class="m" style="left:238.40px;top:1384.15px;font-size:26px;color:#101010;">11 75 ea 12 00 00 00 00  01 03 03 07</span><span class="m" style="left:1034.00px;top:1384.15px;font-size:26px;color:#101010"><b style="color:#a0a0a0;font-weight:normal">·</b>u<b style="color:#a0a0a0;font-weight:normal">·</b><b style="color:#a0a0a0;font-weight:normal">·</b><b style="color:#a0a0a0;font-weight:normal">·</b><b style="color:#a0a0a0;font-weight:normal">·</b><b style="color:#a0a0a0;font-weight:normal">·</b><b style="color:#a0a0a0;font-weight:normal">·</b> <b style="color:#a0a0a0;font-weight:normal">·</b><b style="color:#a0a0a0;font-weight:normal">·</b><b style="color:#a0a0a0;font-weight:normal">·</b><b style="color:#a0a0a0;font-weight:normal">·</b></span><div style="left:127px;top:1717px;width:1900px;height:44px;background:#eeeeee"></div><svg style="left:146px;top:1724px" width="30" height="30" viewBox="0 0 30 30"><defs><radialGradient id="yc" cx="0.4" cy="0.35" r="0.7"><stop offset="0" stop-color="#eef0a6"/><stop offset="1" stop-color="#d6d26a"/></radialGradient></defs><circle cx="15" cy="15" r="13" fill="url(#yc)" stroke="#77763c" stroke-width="1.8"/></svg><svg style="left:192px;top:1724px" width="32" height="32" viewBox="0 0 32 32"><rect x="1.5" y="1.5" width="24" height="28" fill="#f7f7f3" stroke="#cfcfcb" stroke-width="1.5"/><rect x="2" y="1" width="17.5" height="8" fill="#6a9ad8"/><path d="M7 9 v-4 h2 v-2 h2 v6 z" fill="#f4f4f0"/><rect x="5" y="12" width="8" height="3" fill="#d9d9d9"/><rect x="5" y="19" width="18" height="3" fill="#dedede"/><rect x="5" y="25" width="18" height="2.5" fill="#dcdcdc"/><path d="M10.5 19.5 L27.5 2.5" stroke="#4b4b4b" stroke-width="4.2"/><path d="M27.5 2.5 l1.5 -1.5" stroke="#777" stroke-width="4"/><rect x="8" y="18" width="3.5" height="3.5" fill="#000"/></svg><span class="s" style="left:256.00px;top:1726.36px;font-size:26px;color:#111;transform:scaleX(1.1076);">wireshark_any0MS232.pcapng</span><div style="left:1143px;top:1727px;width:2px;height:27px;background:repeating-linear-gradient(#b6b6b6 0 2px,transparent 2px 6px)"></div><span class="s" style="left:1172.33px;top:1726.36px;font-size:26px;color:#111;transform:scaleX(1.1211);">Packets: 38729 · Displayed: 18004 (46.5%)</span><div style="left:1747px;top:1727px;width:2px;height:27px;background:repeating-linear-gradient(#b6b6b6 0 2px,transparent 2px 6px)"></div><span class="s" style="left:1776.74px;top:1726.36px;font-size:26px;color:#111;transform:scaleX(1.1286);">Profile: Default</span><svg style="left:2002px;top:1734px" width="26" height="26" viewBox="0 0 26 26"><g fill="#c4c4c4"><rect x="19" y="3" width="2" height="2"/><rect x="13" y="9" width="2" height="2"/><rect x="19" y="9" width="2" height="2"/><rect x="7" y="15" width="2" height="2"/><rect x="13" y="15" width="2" height="2"/><rect x="19" y="15" width="2" height="2"/><rect x="1" y="21" width="2" height="2"/><rect x="7" y="21" width="2" height="2"/><rect x="13" y="21" width="2" height="2"/><rect x="19" y="21" width="2" height="2"/></g></svg><svg style="left:0;top:0" width="2152" height="1892" viewBox="0 0 2152 1892">
<g fill="none" stroke="#fff" stroke-width="5" stroke-linejoin="round" stroke-linecap="round">
<path d="M1011.5 1821.5 h20 v6.5 h-2.5 v8 l13.5 19.5 v9 h-42 v-9 l13.5 -19.5 v-8 h-2.5 z"/>
<path d="M1014.5 1845 l5 4 l-5 4.5"/><path d="M1023.5 1855 h5"/>
<path d="M1057.5 1832 v25 h12"/>
<circle cx="1081" cy="1851" r="6.8"/><path d="M1088.5 1844.5 v12.5"/>
<path d="M1097.5 1832 v25"/><circle cx="1104" cy="1851" r="6.8"/>
<path d="M1131 1832.5 h-8 a4 4 0 0 0 -4 4 v16.5 a4 4 0 0 0 4 4 h8 M1120 1845.5 h10"/>
<path d="M1138.5 1843.5 l11.5 14 M1150 1843.5 l-11.5 14"/>
</g></svg></body></html>
